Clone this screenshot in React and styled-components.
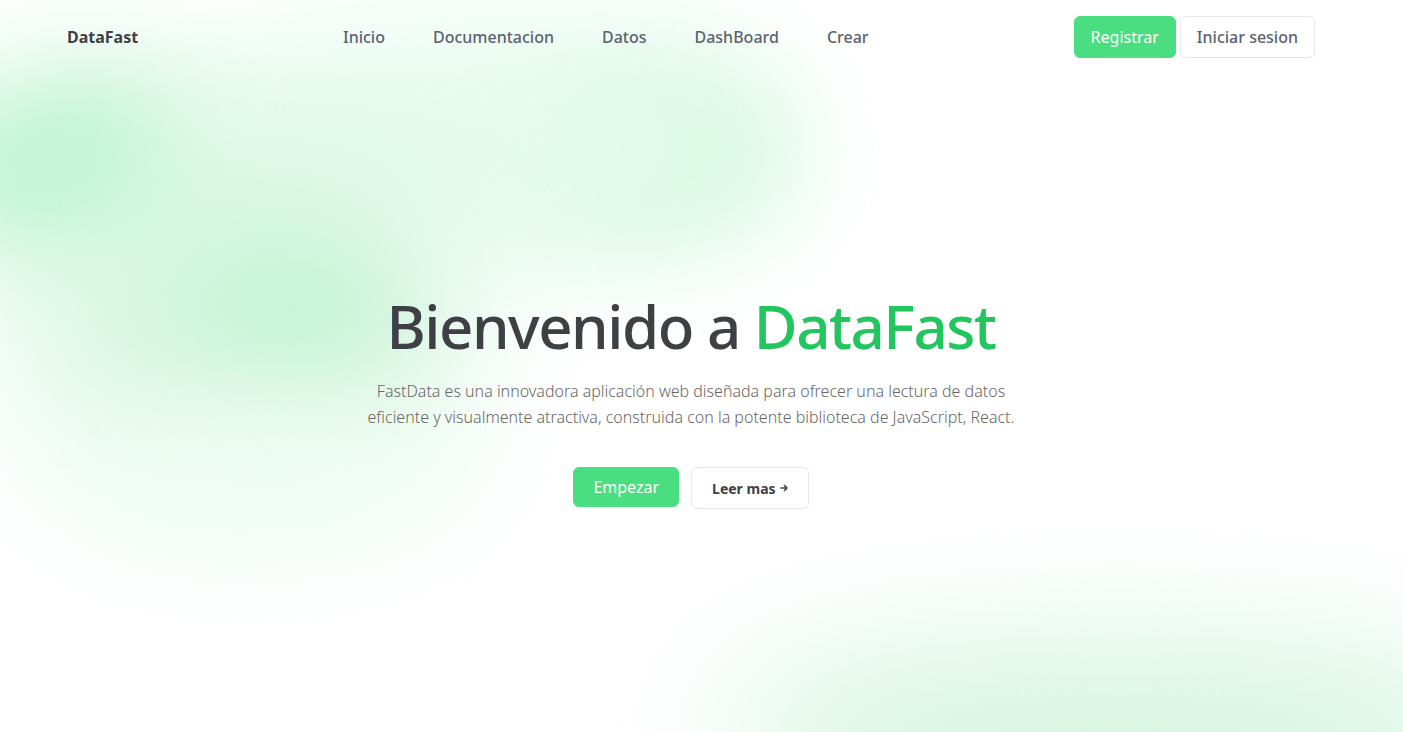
import React from "react";
import styled, { createGlobalStyle } from "styled-components";

const Global = createGlobalStyle`
  html, body { margin: 0; padding: 0; background: #ffffff; }
  body { font-family: "Noto Sans", "Open Sans", sans-serif; -webkit-font-smoothing: antialiased; }
  * { box-sizing: border-box; }
`;

const Page = styled.div`
  position: relative;
  min-height: 732px;
  overflow: hidden;
  isolation: isolate;
`;

const Blob = styled.div`
  position: absolute;
  z-index: -1;
  border-radius: 50%;
  filter: blur(${(p) => p.$blur}px);
  background: ${(p) => p.$color};
  opacity: ${(p) => p.$opacity ?? 1};
  pointer-events: none;
`;

const Header = styled.header`
  display: flex;
  align-items: center;
  justify-content: space-between;
  height: 74px;
  padding: 0 88px 0 67px;
`;

const Logo = styled.a`
  font-size: 16px;
  font-weight: 700;
  color: #3f3f46;
  width: 276px;
`;

const Nav = styled.nav`
  display: flex;
  gap: 48px;
  flex: 1;
`;

const NavLink = styled.a`
  font-size: 16px;
  color: #5b6270;
  font-weight: 500;
`;

const Actions = styled.div`
  display: flex;
  gap: 4px;
  align-items: center;
`;

const Button = styled.button`
  display: inline-flex;
  align-items: center;
  gap: 4px;
  font-family: inherit;
  font-size: ${(p) => (p.$small ? "14px" : "16px")};
  font-weight: ${(p) => p.$weight ?? 400};
  height: ${(p) => p.$h}px;
  padding: 0 ${(p) => p.$px}px;
  border-radius: 6px;
  cursor: pointer;
  border: 1px solid ${(p) => (p.$primary ? "#4ade80" : "#e5e7eb")};
  background: ${(p) => (p.$primary ? "#4ade80" : "#ffffff")};
  color: ${(p) => (p.$primary ? "#ffffff" : p.$dark ? "#3f3f46" : "#5b6270")};
`;

const Hero = styled.main`
  display: flex;
  flex-direction: column;
  align-items: center;
  text-align: center;
  padding: 222px 21px 0 0;
`;

const Title = styled.h1`
  margin: 0;
  font-size: 60px;
  line-height: 1;
  font-weight: 500;
  color: #3f3f46;
  letter-spacing: -1.5px;
`;

const Accent = styled.span`
  color: #22c55e;
`;

const Lead = styled.p`
  margin: 22px 0 0;
  max-width: 680px;
  font-size: 16px;
  line-height: 26px;
  color: #6b6666;
  font-weight: 300;
`;

const CTA = styled.div`
  display: flex;
  gap: 12px;
  margin-top: 37px;
`;

const Arrow = () => (
  <svg width="8" height="8" viewBox="0 0 8 8" fill="none" stroke="currentColor" strokeWidth="1.5" strokeLinecap="round" strokeLinejoin="round">
    <path d="M1 4h6M4.5 1.5L7 4 4.5 6.5" />
  </svg>
);

export default function App() {
  return (
    <Page>
      <Global />
      <Blob $color="#bcf4cf" $blur={55} style={{ left: -80, top: 70, width: 320, height: 200 }} />
      <Blob $color="#b9f4cd" $blur={55} style={{ left: 520, top: 80, width: 260, height: 140 }} />
      <Blob $color="#e4fbec" $blur={60} style={{ left: 150, top: 30, width: 620, height: 230 }} />
      <Blob $color="#d6f7e1" $blur={70} style={{ left: 20, top: 160, width: 440, height: 330 }} />
      <Blob $color="#c6f3d4" $blur={50} style={{ left: 190, top: 240, width: 200, height: 170 }} />
      <Blob $color="#f1fdf5" $blur={60} style={{ left: 60, top: 400, width: 420, height: 130 }} />
      <Blob $color="#d0f4dc" $blur={70} style={{ left: 720, top: 650, width: 800, height: 170 }} />
      <Header>
        <Logo>DataFast</Logo>
        <Nav>
          <NavLink>Inicio</NavLink>
          <NavLink>Documentacion</NavLink>
          <NavLink>Datos</NavLink>
          <NavLink>DashBoard</NavLink>
          <NavLink>Crear</NavLink>
        </Nav>
        <Actions>
          <Button $primary $h={42} $px={16}>Registrar</Button>
          <Button $weight={500} $h={42} $px={16}>Iniciar sesion</Button>
        </Actions>
      </Header>
      <Hero>
        <Title>
          Bienvenido a <Accent>DataFast</Accent>
        </Title>
        <Lead>
          FastData es una innovadora aplicación web diseñada para ofrecer una lectura de datos
          eficiente y visualmente atractiva, construida con la potente biblioteca de JavaScript, React.
        </Lead>
        <CTA>
          <Button $primary $h={40} $px={19}>Empezar</Button>
          <Button $dark $weight={700} $small $h={42} $px={20}>Leer mas <Arrow /></Button>
        </CTA>
      </Hero>
    </Page>
  );
}
